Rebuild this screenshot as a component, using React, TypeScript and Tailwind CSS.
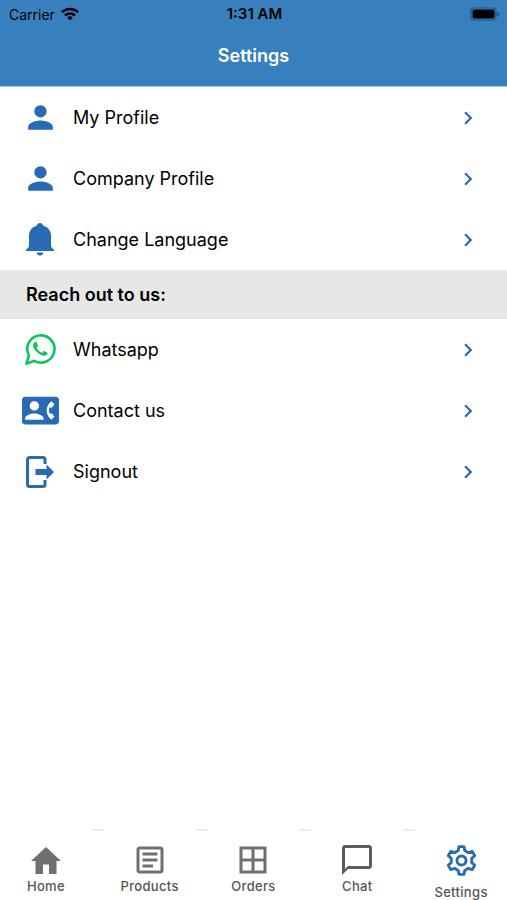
import { Fragment } from 'react';
import type { ReactNode } from 'react';
import { clsx } from 'clsx';
import { MdBorderAll, MdChevronRight, MdContactPhone, MdOutlineArticle, MdOutlineChatBubbleOutline, MdPerson } from 'react-icons/md';

type Item = { label: string; icon: ReactNode };

function BellIcon() {
  return (
    <svg viewBox="0 0 28 33" className="h-[33px] w-7" fill="currentColor" aria-hidden="true">
      <path d="M14 0c1.700 0 2.900 1.100 3.100 2.600C21.900 4 25 7.800 25 13v9.500c0 1.300.8 2.400 3 4V28H0v-1.500c2.200-1.600 3-2.700 3-4V13C3 7.800 6.100 4 10.900 2.600 11.100 1.100 12.300 0 14 0z" />
      <path d="M10.700 29.500h6.600c-.2 1.900-1.500 3-3.300 3s-3.100-1.100-3.300-3z" />
    </svg>
  );
}

function WhatsappIcon() {
  return (
    <svg viewBox="0 0 31 31" className="h-[31px] w-[31px] text-[#10c45c]" aria-hidden="true">
      <path d="M1.700 29.400 3.900 21.400A13.600 13.600 0 1 1 9.300 26.900z" fill="none" stroke="currentColor" strokeWidth="2.600" />
      <path
        d="M9.500 8.200c.6-.7 1.700-.8 2.100.1l1.300 3c.3.900-1.400 1.900-1.100 2.600 1 2.200 2.900 3.900 5.100 4.800.7.200 1.500-1.900 2.200-1.600l3 1.400c.8.500.5 1.600-.3 2.400C19.500 22.500 16 21.500 13 19 9.500 16 6 11.500 9.500 8.200z"
        fill="currentColor"
      />
    </svg>
  );
}

function SignoutIcon() {
  return (
    <svg viewBox="0 0 28 32" className="h-8 w-7" aria-hidden="true">
      <path
        d="M19 8V3.500a2 2 0 0 0-2-2H3.500a2 2 0 0 0-2 2v25a2 2 0 0 0 2 2H17a2 2 0 0 0 2-2V24"
        fill="none"
        stroke="currentColor"
        strokeWidth="3"
      />
      <path d="M9.500 13h11V8.500L28 16l-7.500 7.500V19h-11z" fill="currentColor" />
    </svg>
  );
}

function HomeIcon() {
  return (
    <svg viewBox="0 0 30 27" className="h-[27px] w-[30px]" fill="currentColor" aria-hidden="true">
      <path d="M15 0 30 14h-4.500v13H18v-9.500h-6V27H4.500V14H0z" />
    </svg>
  );
}

function GearIcon() {
  return (
    <svg viewBox="-15 -15 30 30" className="h-[31px] w-[31px]" fill="none" stroke="currentColor" strokeWidth="2.800" strokeLinejoin="round" aria-hidden="true">
      <path d="M-2.400-13.400H2.400L3.200-9.600 6.700-7.600 10.400-8.800 12.800-4.600 9.900-2V2L12.800 4.600 10.400 8.800 6.700 7.600 3.200 9.600 2.400 13.400H-2.400L-3.200 9.600-6.700 7.600-10.400 8.800-12.800 4.600-9.900 2V-2L-12.800-4.600-10.400-8.800-6.700-7.600-3.200-9.600z" />
      <circle r="4.400" />
    </svg>
  );
}

function WifiIcon() {
  return (
    <svg viewBox="0 0 18 14" className="h-3.5 w-[18px]" fill="none" stroke="currentColor" strokeWidth="2.500" aria-hidden="true">
      <path d="M1 5.200a11.500 11.500 0 0 1 16 0" />
      <path d="M4 8.500a7.200 7.200 0 0 1 10 0" />
      <path d="M9 13.500 6.200 10.700a4 4 0 0 1 5.600 0z" fill="currentColor" stroke="none" />
    </svg>
  );
}

function BatteryIcon() {
  return (
    <svg viewBox="0 0 30 14" className="h-3.5 w-[30px]" aria-hidden="true">
      <rect x="1" y="1" width="25" height="12" rx="3.500" fill="none" stroke="#1f5284" strokeWidth="1.200" />
      <rect x="2.500" y="2.500" width="22" height="9" rx="2" fill="#000" />
      <path d="M27.500 5c1.300.3 1.800 1 1.800 2s-.5 1.700-1.800 2z" fill="#1f5284" />
    </svg>
  );
}

const accountItems: Item[] = [
  { label: 'My Profile', icon: <MdPerson size={37} /> },
  { label: 'Company Profile', icon: <MdPerson size={37} /> },
  { label: 'Change Language', icon: <BellIcon /> },
];

const contactItems: Item[] = [
  { label: 'Whatsapp', icon: <WhatsappIcon /> },
  { label: 'Contact us', icon: <MdContactPhone size={37} /> },
  { label: 'Signout', icon: <SignoutIcon /> },
];

const tabs: Item[] = [
  { label: 'Home', icon: <HomeIcon /> },
  { label: 'Products', icon: <MdOutlineArticle size={36} /> },
  { label: 'Orders', icon: <MdBorderAll size={36} /> },
  { label: 'Chat', icon: <MdOutlineChatBubbleOutline size={36} className="text-[#5c5c5c]" /> },
  { label: 'Settings', icon: <GearIcon /> },
];

function MenuList({ items }: { items: Item[] }) {
  return (
    <ul>
      {items.map((item) => (
        <li key={item.label}>
          <button className="flex h-[61px] w-full items-center pr-[26px] pl-5 text-left text-[18px]">
            <span className="flex w-10 shrink-0 justify-center text-[#286ab3]">{item.icon}</span>
            <span className="ml-[13px] flex-1">{item.label}</span>
            <MdChevronRight size={26} className="text-[#286ab3]" />
          </button>
        </li>
      ))}
    </ul>
  );
}

export default function App() {
  const active = 'Settings';

  return (
    <div className="flex min-h-screen flex-col bg-white font-['Inter',sans-serif] text-black">
      <header className="border-b border-[#a9c9e4] bg-[#3880bd]">
        <div className="grid h-7 grid-cols-3 items-center pr-[7px] pl-[9px] text-[14px]">
          <div className="flex items-center gap-1.5">
            <span>Carrier</span>
            <WifiIcon />
          </div>
          <span className="text-center text-[15px] font-semibold">1:31 AM</span>
          <div className="flex justify-end">
            <BatteryIcon />
          </div>
        </div>
        <h1 className="h-[58px] text-center text-[18px] leading-[56px] font-semibold text-white">Settings</h1>
      </header>

      <main className="flex-1">
        <MenuList items={accountItems} />
        <h2 className="bg-[#e7e7e7] px-[26px] text-[18px] leading-[49px] font-semibold">Reach out to us:</h2>
        <MenuList items={contactItems} />
      </main>

      <nav className="flex h-[71px]">
        {tabs.map((tab, i) => (
          <Fragment key={tab.label}>
            {i > 0 && <span className="h-0.5 w-3 shrink-0 bg-[#ececec]" />}
            <button
              aria-current={tab.label === active ? 'page' : undefined}
              className={clsx(
                'flex flex-1 basis-0 flex-col items-center pt-[13px] text-[13px] leading-4 font-medium tracking-wide text-[#555]',
                tab.label === active ? 'gap-1.5' : 'gap-0',
              )}
            >
              <span className={clsx('flex h-9 items-center', tab.label === active ? 'text-[#286ab3]' : 'text-[#707070]')}>
                {tab.icon}
              </span>
              {tab.label}
            </button>
          </Fragment>
        ))}
      </nav>
    </div>
  );
}
